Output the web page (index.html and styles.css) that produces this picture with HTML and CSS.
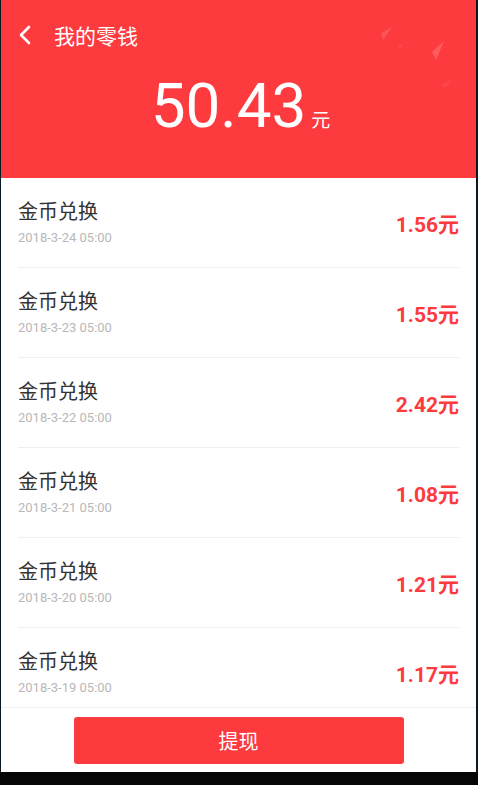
FILE: index.html
```html
<!DOCTYPE html>
<html lang="zh-CN">
<head>
    <meta charset="UTF-8">
    <meta name="viewport" content="width=device-width, initial-scale=1.0">
    <title>我的零钱</title>
    <link rel="stylesheet" href="styles.css">
</head>
<body>
    <div class="app">
        <div class="header">
            <svg class="header-deco" width="100" height="80" viewBox="0 0 100 80">
                <polygon points="10,13 21,7 12,20" fill="#ffffff" opacity="0.14"/>
                <polygon points="27,27 33,22 29,28" fill="#ffffff" opacity="0.1"/>
                <polygon points="61,32 73,21 65,40" fill="#ffffff" opacity="0.17"/>
                <polygon points="69,65 83,57 75,68" fill="#ffffff" opacity="0.05"/>
            </svg>
            <div class="nav">
                <svg class="back" width="14" height="20" viewBox="0 0 14 20">
                    <path d="M11 2 L3 10 L11 18" fill="none" stroke="#fff" stroke-width="2.6" stroke-linecap="round" stroke-linejoin="round"/>
                </svg>
                <span class="nav-title">我的零钱</span>
            </div>
            <div class="balance">
                <span class="balance-num">50.43</span><span class="balance-unit">元</span>
            </div>
        </div>

        <div class="list">
            <div class="row">
                <div class="row-info">
                    <div class="row-title">金币兑换</div>
                    <div class="row-date">2018-3-24 05:00</div>
                </div>
                <div class="row-amount">1.56元</div>
            </div>
            <div class="row">
                <div class="row-info">
                    <div class="row-title">金币兑换</div>
                    <div class="row-date">2018-3-23 05:00</div>
                </div>
                <div class="row-amount">1.55元</div>
            </div>
            <div class="row">
                <div class="row-info">
                    <div class="row-title">金币兑换</div>
                    <div class="row-date">2018-3-22 05:00</div>
                </div>
                <div class="row-amount">2.42元</div>
            </div>
            <div class="row">
                <div class="row-info">
                    <div class="row-title">金币兑换</div>
                    <div class="row-date">2018-3-21 05:00</div>
                </div>
                <div class="row-amount">1.08元</div>
            </div>
            <div class="row">
                <div class="row-info">
                    <div class="row-title">金币兑换</div>
                    <div class="row-date">2018-3-20 05:00</div>
                </div>
                <div class="row-amount">1.21元</div>
            </div>
            <div class="row">
                <div class="row-info">
                    <div class="row-title">金币兑换</div>
                    <div class="row-date">2018-3-19 05:00</div>
                </div>
                <div class="row-amount">1.17元</div>
            </div>
        </div>

        <div class="footer">
            <button class="withdraw-button">提现</button>
        </div>
    </div>
    <div class="navbar"></div>
</body>
</html>
```

FILE: styles.css
```css
body {
    margin: 0;
    background-color: #0c1922;
    font-family: Roboto, "Noto Sans CJK SC", sans-serif;
}
.app {
    margin-left: 1px;
    width: 475px;
    height: 772px;
    display: flex;
    flex-direction: column;
    background-color: #fff;
    overflow: hidden;
}
.header {
    position: relative;
    height: 178px;
    flex-shrink: 0;
    background-color: #fd3a3e;
    color: #fff;
    overflow: hidden;
}
.header-deco {
    position: absolute;
    top: 20px;
    left: 370px;
}
.nav {
    display: flex;
    align-items: center;
    height: 24px;
    padding: 23px 0 0 17px;
}
.back {
    display: block;
}
.nav-title {
    margin-left: 22px;
    font-size: 21px;
    line-height: 24px;
    font-family: "Noto Sans CJK SC", sans-serif;
}
.balance {
    display: flex;
    justify-content: center;
    align-items: baseline;
    margin-top: 22px;
    padding-left: 4px;
}
.balance-num {
    font-size: 62px;
    line-height: 74px;
    font-weight: 400;
}
.balance-unit {
    margin-left: 5px;
    font-size: 19px;
    font-family: "Noto Sans CJK SC", sans-serif;
}
.list {
    flex: 1;
    overflow: hidden;
}
.row {
    display: flex;
    align-items: center;
    justify-content: space-between;
    height: 89px;
    margin: 0 17px;
    border-bottom: 1px solid #efefef;
}
.row-info {
    display: flex;
    flex-direction: column;
    gap: 6px;
}
.row-title {
    font-size: 20px;
    line-height: 24px;
    color: #333;
    font-family: "Noto Sans CJK SC", sans-serif;
}
.row-date {
    font-size: 13px;
    line-height: 18px;
    color: #b8b8b8;
}
.row-amount {
    font-size: 21px;
    font-weight: bold;
    color: #fd3a3e;
}
.footer {
    height: 65px;
    flex-shrink: 0;
    display: flex;
    justify-content: center;
    padding-top: 9px;
    box-sizing: border-box;
    border-top: 1px solid #eeeeee;
    background-color: #fff;
}
.withdraw-button {
    width: 330px;
    height: 47px;
    border: none;
    border-radius: 3px;
    background-color: #fd3a3e;
    color: #fff;
    font-size: 20px;
    font-family: "Noto Sans CJK SC", sans-serif;
}
.navbar {
    height: 13px;
    background-color: #050505;
}
```
